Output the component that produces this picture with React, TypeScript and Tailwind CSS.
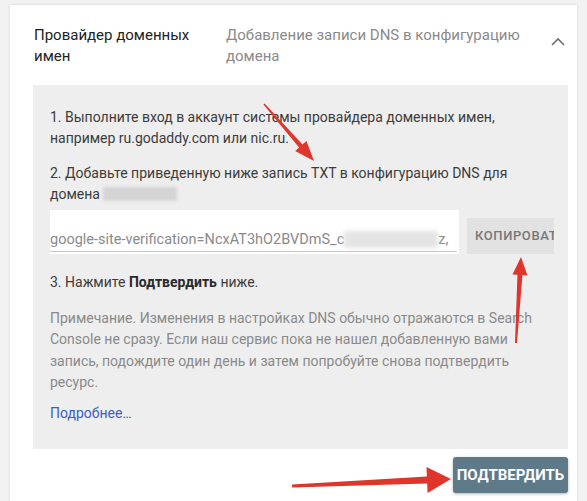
import React from "react";

type Pt = [number, number];

function arrowPoints(from: Pt, to: Pt, tail: number, shaft: number, headW: number, headL: number) {
  const dx = to[0] - from[0];
  const dy = to[1] - from[1];
  const len = Math.hypot(dx, dy);
  const ux = dx / len;
  const uy = dy / len;
  const nx = -uy;
  const ny = ux;
  const bx = to[0] - ux * headL;
  const by = to[1] - uy * headL;
  const pts: Pt[] = [
    [from[0] + (nx * tail) / 2, from[1] + (ny * tail) / 2],
    [bx + (nx * shaft) / 2, by + (ny * shaft) / 2],
    [bx + (nx * headW) / 2, by + (ny * headW) / 2],
    [to[0], to[1]],
    [bx - (nx * headW) / 2, by - (ny * headW) / 2],
    [bx - (nx * shaft) / 2, by - (ny * shaft) / 2],
    [from[0] - (nx * tail) / 2, from[1] - (ny * tail) / 2],
  ];
  return pts.map((p) => p.join(",")).join(" ");
}

function Arrows() {
  return (
    <svg className="pointer-events-none absolute left-0 top-0" width="587" height="501">
      <polygon points={arrowPoints([264, 104], [314, 161], 1.5, 4.5, 15, 20)} fill="#e0352b" />
      <polygon points={arrowPoints([516, 343], [521, 257], 2, 5, 15, 18)} fill="#e0352b" />
      <polygon points={arrowPoints([292, 486], [451, 479], 3, 7, 26, 24)} fill="#e0352b" />
    </svg>
  );
}

export default function App() {
  return (
    <div
      className="relative h-[501px] w-[587px] overflow-hidden bg-[#f2f2f2] pl-[10px] pt-[5px]"
      style={{ fontFamily: "Roboto, 'Noto Sans', sans-serif" }}
    >
      <div className="h-[520px] w-[567px] bg-white pl-[24px] pt-[20px] shadow-[0_0_3px_rgba(0,0,0,0.12)]">
        {/* header row */}
        <div className="flex text-[15px] leading-[21px]">
          <div className="w-[192px] text-[#222]">
            Провайдер доменных
            <br />
            имен
          </div>
          <div className="w-[300px] text-[#8a8a8a]">
            Добавление записи DNS в конфигурацию
            <br />
            домена
          </div>
          <div className="ml-[24px] mt-[12px]">
            <svg width="16" height="10" viewBox="0 0 16 10">
              <polyline points="2,8 8,2 14,8" fill="none" stroke="#6f6f6f" strokeWidth="1.6" />
            </svg>
          </div>
        </div>

        {/* instructions panel */}
        <div className="ml-[-1px] mt-[18px] w-[535px] bg-[#eeeeee] pb-[25px] pl-[17px] pt-[22px] text-[14px] leading-[21px] text-[#3c3c3c]">
          <p className="whitespace-nowrap">
            1. Выполните вход в аккаунт системы провайдера доменных имен,
            <br />
            например ru.godaddy.com или nic.ru.
          </p>
          <p className="mt-[14px] whitespace-nowrap">
            2. Добавьте приведенную ниже запись TXT в конфигурацию DNS для
            <br />
            домена{" "}
            <span className="inline-block h-[14px] w-[74px] translate-y-[2px] bg-[#d4d4d4] blur-[1.5px]" />
          </p>

          <div className="mt-[5px] flex items-start">
            <div className="flex h-[44px] w-[409px] items-end bg-white pb-[2px]">
              <div className="flex w-[407px] items-end whitespace-nowrap border-b border-[#c8c8c8] pb-[1px] text-[14.5px] leading-[20px] text-[#8a8a8a]">
                <span>google-site-verification=NcxAT3hO2BVDmS_c</span>
                <span className="mb-[2px] inline-block h-[17px] w-[94px] bg-[#e4e4e4] blur-[2px]" />
                <span>z,</span>
              </div>
            </div>
            <div className="ml-[8px] mt-[8px] h-[36px] w-[87px] overflow-hidden whitespace-nowrap bg-[#e2e2e2] pl-[8px] text-[13px] font-medium leading-[36px] tracking-[0.6px] text-[#777]">
              КОПИРОВАТЬ
            </div>
          </div>

          <p className="mt-[18px]">
            3. Нажмите <b className="font-bold text-[#2a2a2a]">Подтвердить</b> ниже.
          </p>

          <p className="mt-[15px] whitespace-nowrap leading-[21.3px] text-[#8a8a8a]">
            Примечание. Изменения в настройках DNS обычно отражаются в Search
            <br />
            Console не сразу. Если наш сервис пока не нашел добавленную вами
            <br />
            запись, подождите один день и затем попробуйте снова подтвердить
            <br />
            ресурс.
          </p>

          <p className="mt-[10px] text-[#3b5fc0]">Подробнее…</p>
        </div>

        {/* footer */}
        <div className="mt-[8px] flex w-[534px] justify-end">
          <button className="h-[36px] w-[115px] rounded-[3px] bg-[#5e7a89] text-[15px] font-bold text-white shadow-[0_1px_3px_rgba(0,0,0,0.3)]">
            ПОДТВЕРДИТЬ
          </button>
        </div>
      </div>
      <Arrows />
    </div>
  );
}
